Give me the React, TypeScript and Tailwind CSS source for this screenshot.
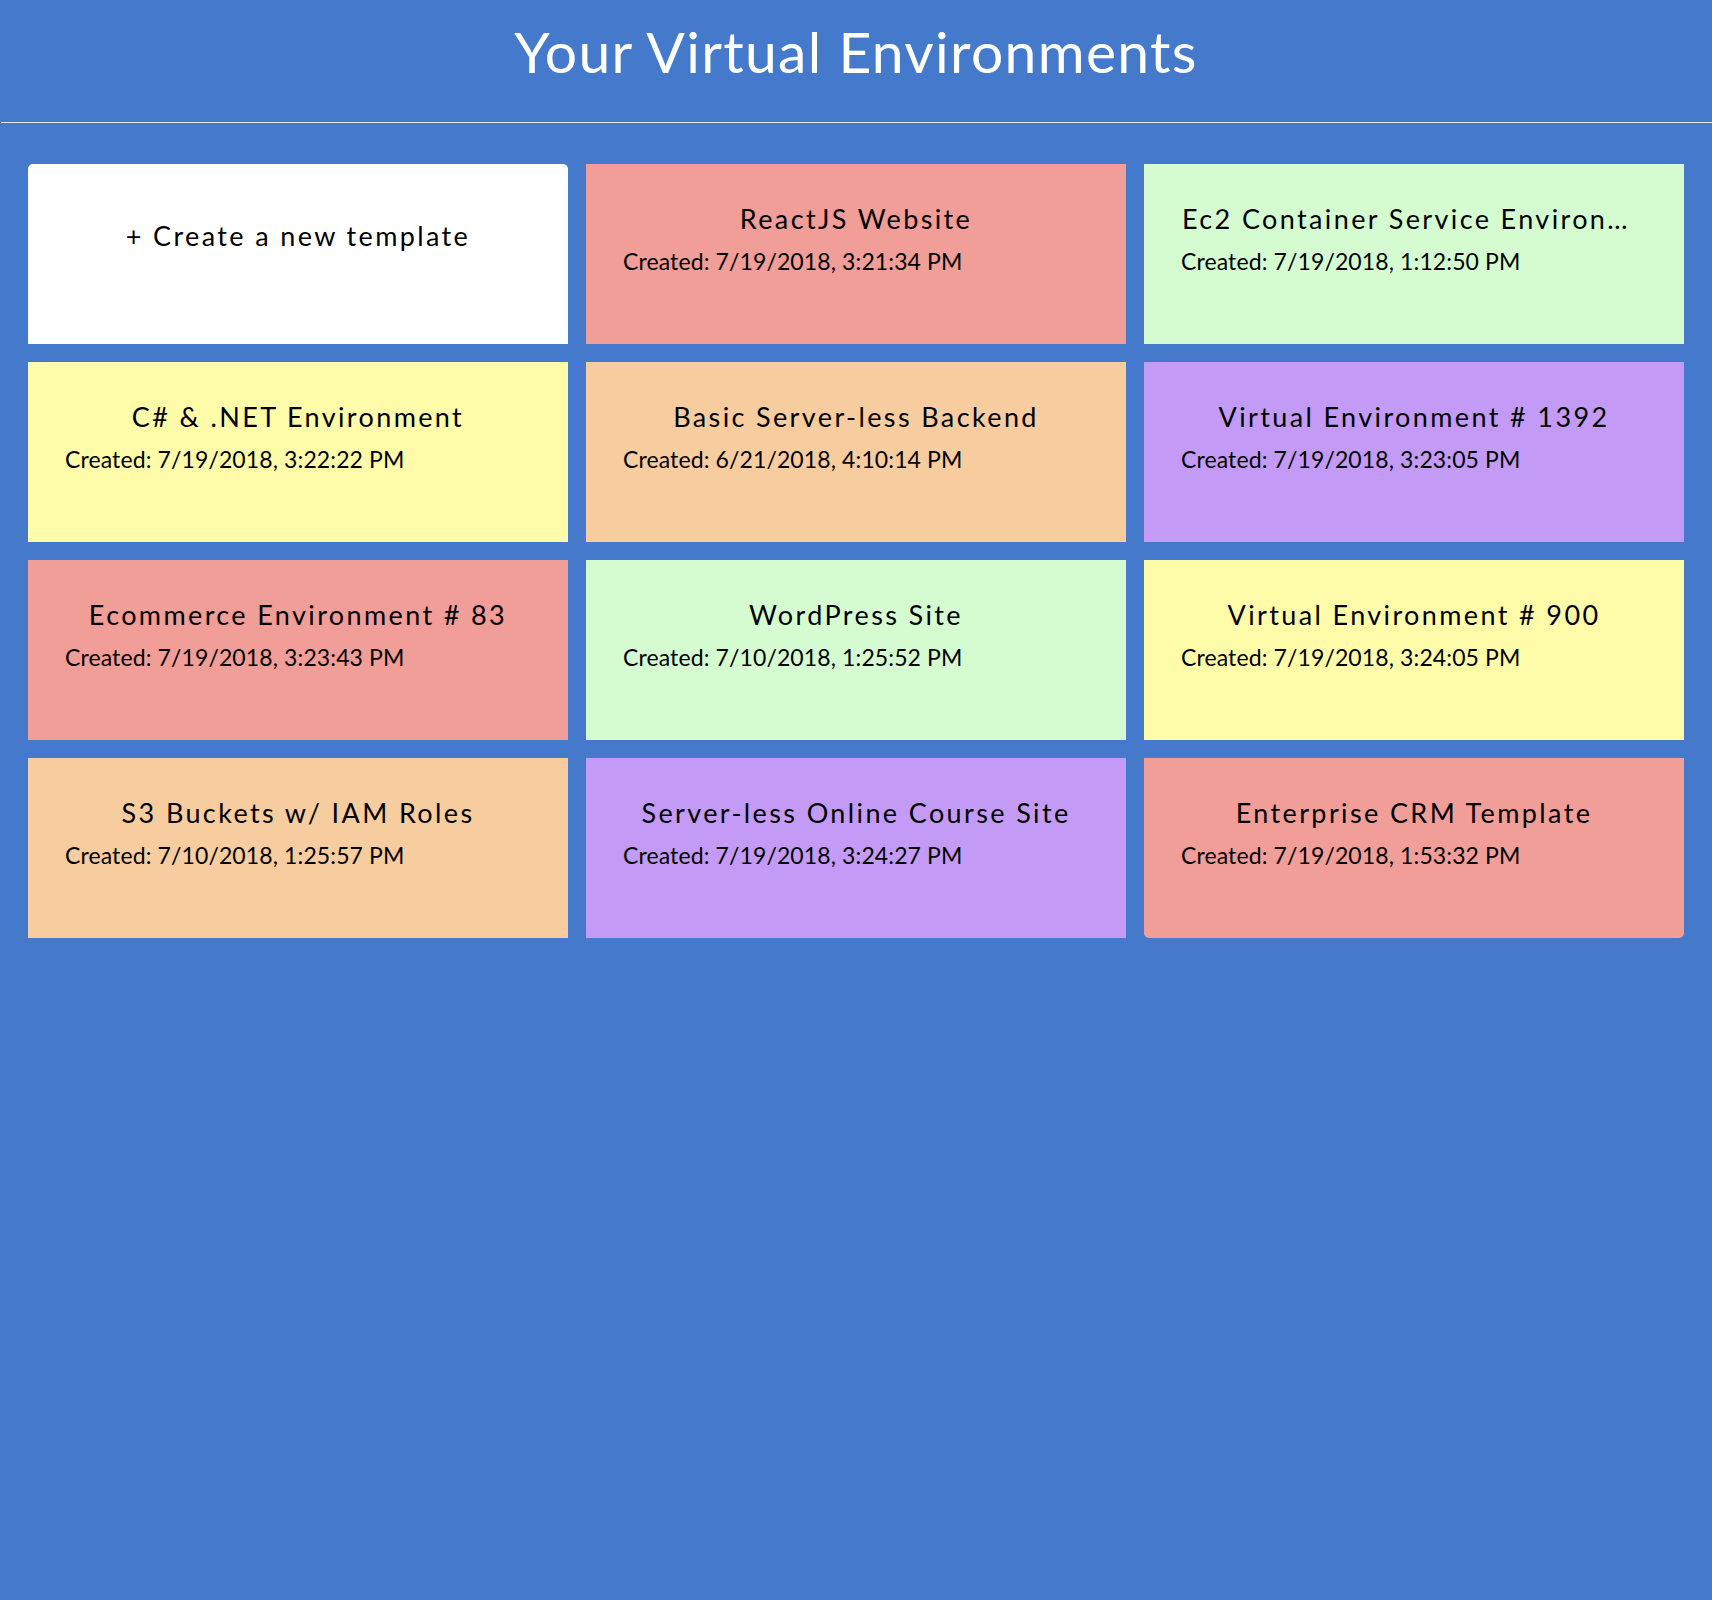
const envs = [
  { name: "ReactJS Website", created: "7/19/2018, 3:21:34 PM" },
  { name: "Ec2 Container Service Environment", created: "7/19/2018, 1:12:50 PM" },
  { name: "C# & .NET Environment", created: "7/19/2018, 3:22:22 PM" },
  { name: "Basic Server-less Backend", created: "6/21/2018, 4:10:14 PM" },
  { name: "Virtual Environment # 1392", created: "7/19/2018, 3:23:05 PM" },
  { name: "Ecommerce Environment # 83", created: "7/19/2018, 3:23:43 PM" },
  { name: "WordPress Site", created: "7/10/2018, 1:25:52 PM" },
  { name: "Virtual Environment # 900", created: "7/19/2018, 3:24:05 PM" },
  { name: "S3 Buckets w/ IAM Roles", created: "7/10/2018, 1:25:57 PM" },
  { name: "Server-less Online Course Site", created: "7/19/2018, 3:24:27 PM" },
  { name: "Enterprise CRM Template", created: "7/19/2018, 1:53:32 PM" },
];

const colors = ["bg-[#f19d98]", "bg-[#d5fcd0]", "bg-[#fefca8]", "bg-[#f7cd9f]", "bg-[#c39bf7]"];

export default function App() {
  return (
    <div className="min-h-[1600px] bg-[#4479cb] font-['Lato','Open_Sans',sans-serif] text-black">
      <h1 className="pt-[17px] pb-[37px] text-center text-[57px] leading-[1.2] tracking-[0.023em] text-white">
        Your Virtual Environments
      </h1>
      <div className="ml-[1px] border-t border-[#e6e6e6]" />
      <div className="grid grid-cols-3 gap-[18px] px-[28px] pt-[41px]">
        <div className="h-[180px] rounded-t-[5px] bg-white pt-[56px] text-center text-[27px] leading-[1.2] tracking-[0.088em]">
          +&nbsp;Create a new template
        </div>
        {envs.map((env, i) => (
          <div
            key={env.name}
            className={`h-[180px] pt-[39px] ${colors[i % 5]} ${i === envs.length - 1 ? "rounded-b-[5px]" : ""}`}
          >
            <p className="truncate px-[38px] text-center text-[27px] leading-[1.2] tracking-[0.088em]">{env.name}</p>
            <p className="mt-[12px] px-[37px] text-[23px] leading-[1.2] tracking-[0.005em]">Created: {env.created}</p>
          </div>
        ))}
      </div>
    </div>
  );
}
